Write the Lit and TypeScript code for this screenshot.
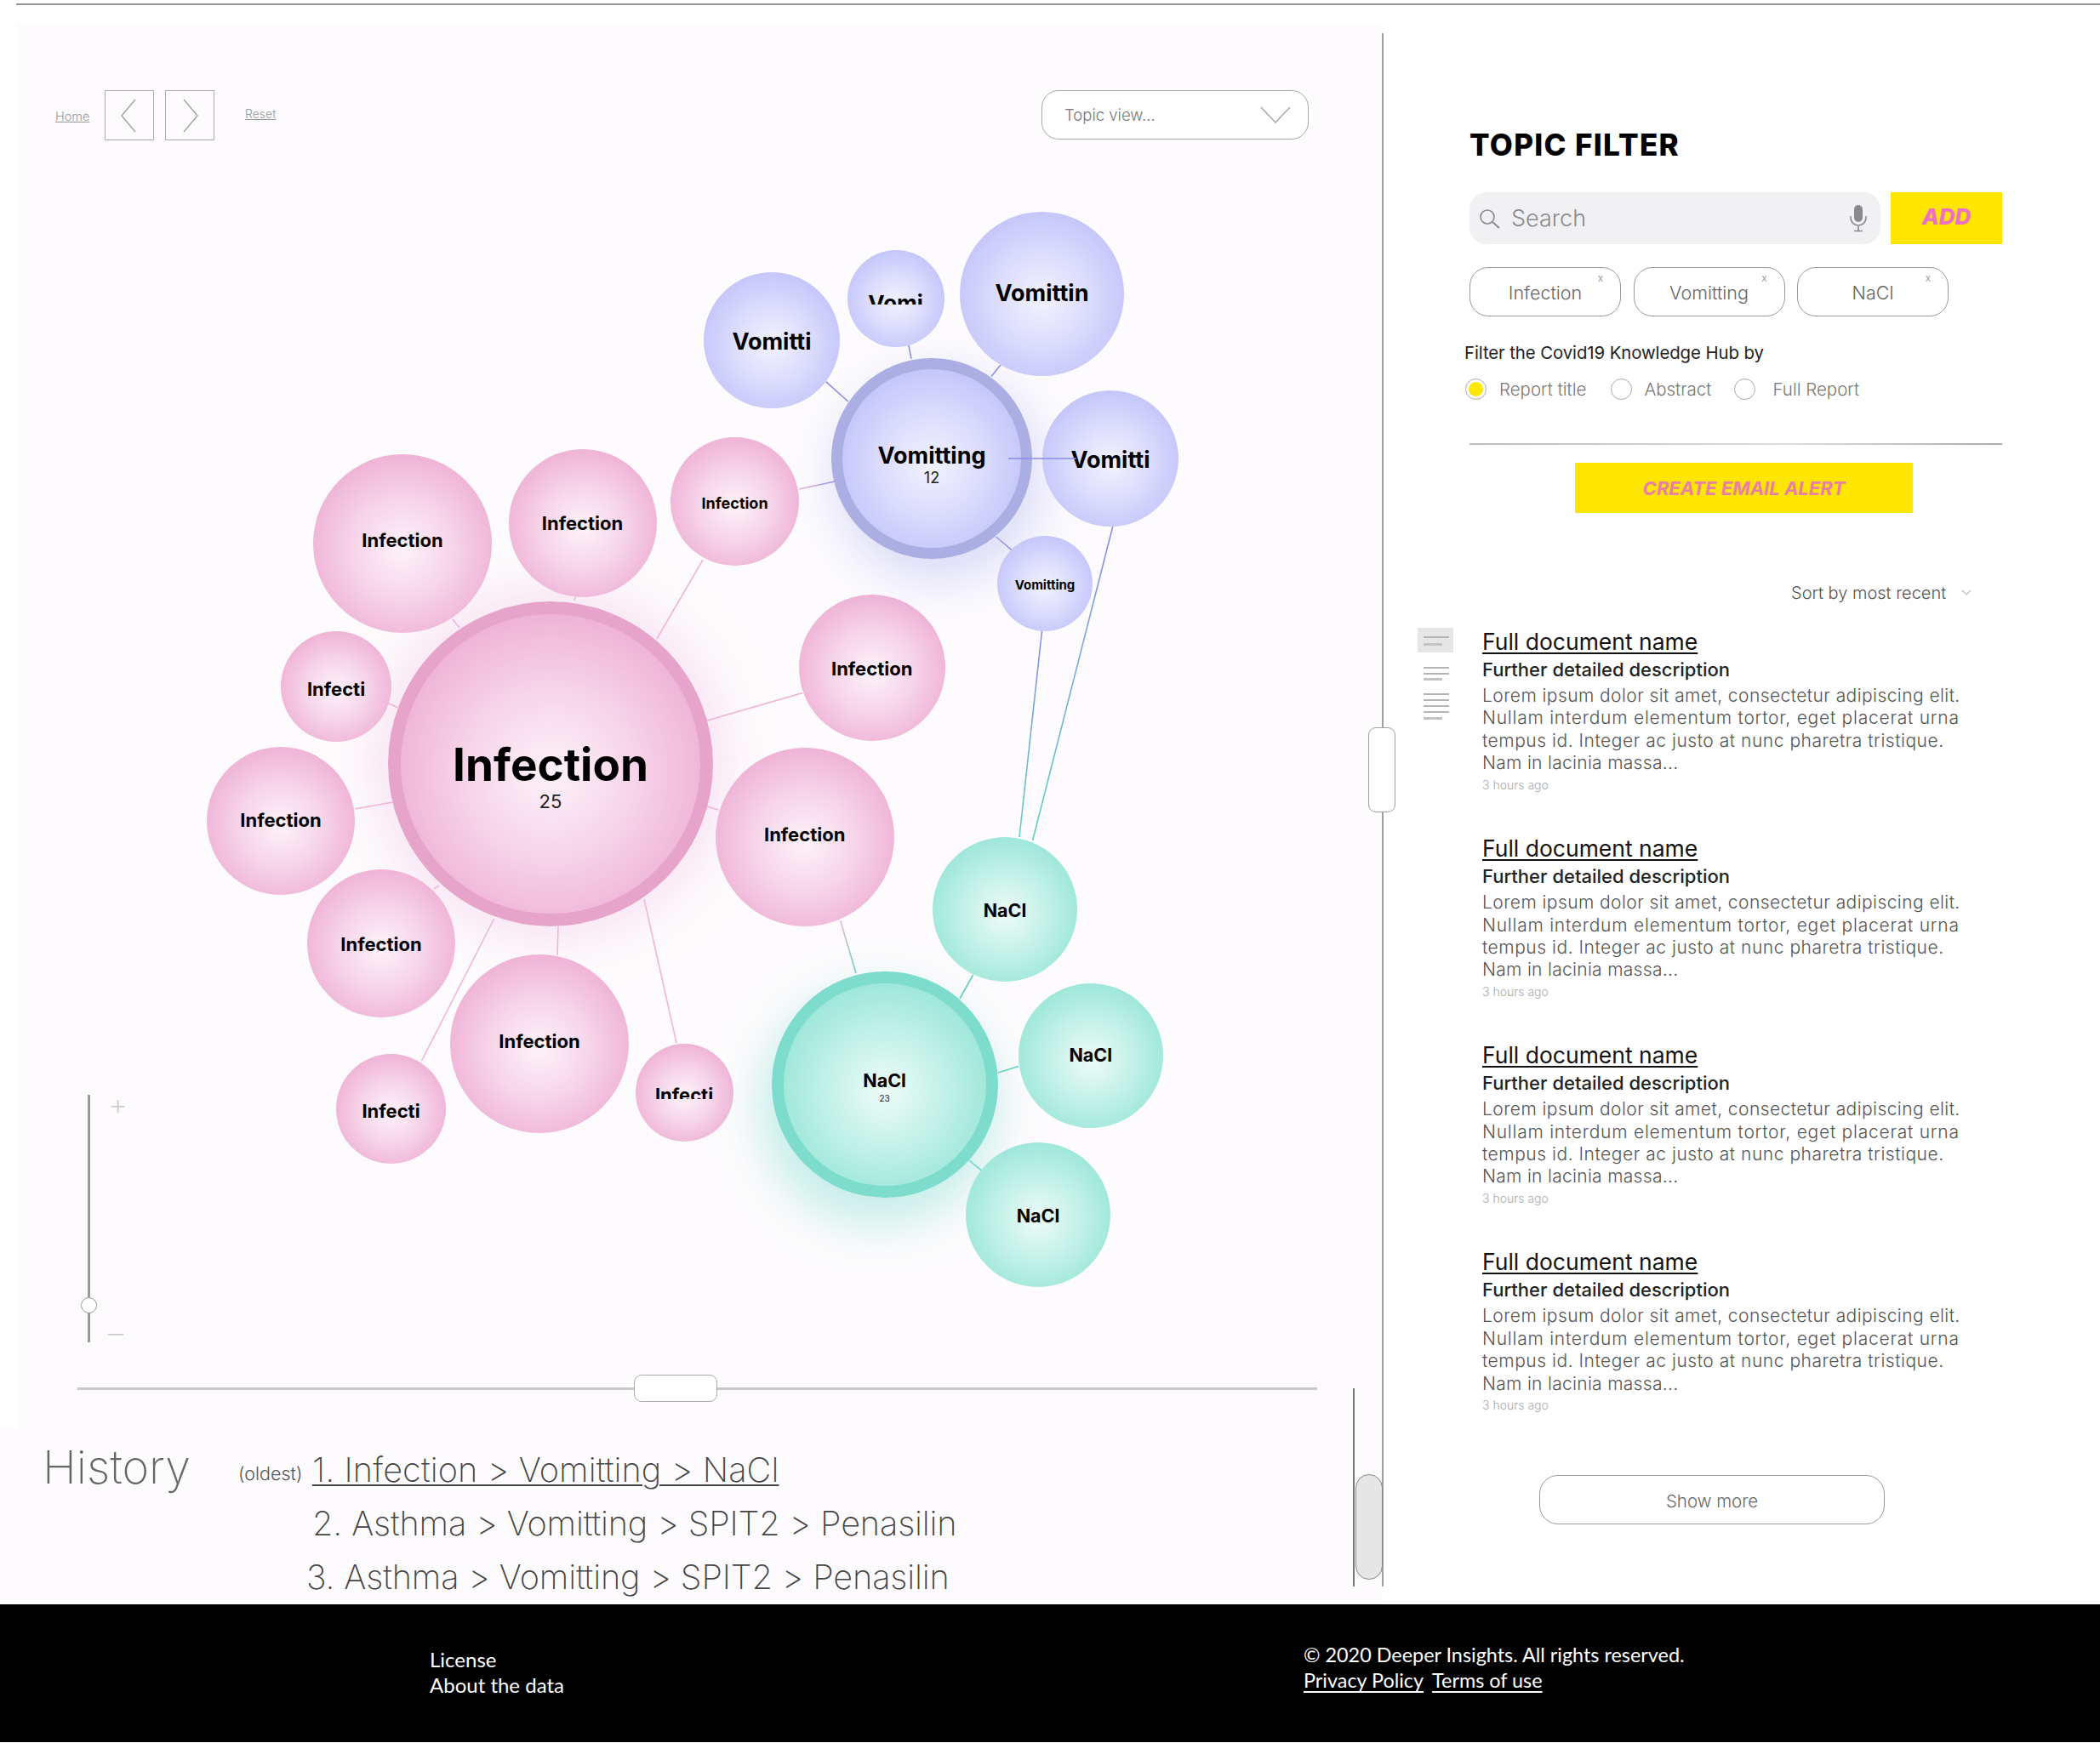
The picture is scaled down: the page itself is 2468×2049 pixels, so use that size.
import { LitElement, html, css, svg } from "lit";
import { customElement } from "lit/decorators.js";

type Tone = "pink" | "blue" | "teal";
interface Node { x: number; y: number; r: number; t: Tone; label: string; fs: number; dy?: number; clip?: number; main?: boolean; count?: string; cfs?: number; cgap?: number; }

const OX = 19, OY = 200;

const NODES: Node[] = [
  { x: 647, y: 897.5, r: 191, t: "pink", label: "Infection", fs: 53, main: true, count: "25", cfs: 22, cgap: 5, dy: 15 },
  { x: 473, y: 639, r: 105, t: "pink", label: "Infection", fs: 22, dy: -4 },
  { x: 684.5, y: 615, r: 87, t: "pink", label: "Infection", fs: 22, dy: 0 },
  { x: 863.6, y: 589, r: 75.5, t: "pink", label: "Infection", fs: 18, dy: 3 },
  { x: 1024.7, y: 785, r: 86, t: "pink", label: "Infection", fs: 22, dy: 1 },
  { x: 945.7, y: 984, r: 105, t: "pink", label: "Infection", fs: 22, dy: -3 },
  { x: 395, y: 807, r: 65, t: "pink", label: "Infecti", fs: 22, dy: 3 },
  { x: 330, y: 964.5, r: 87, t: "pink", label: "Infection", fs: 22, dy: -1 },
  { x: 448, y: 1108.5, r: 87, t: "pink", label: "Infection", fs: 22, dy: 1 },
  { x: 634, y: 1227, r: 105, t: "pink", label: "Infection", fs: 22, dy: -3 },
  { x: 459.5, y: 1303.7, r: 64.5, t: "pink", label: "Infecti", fs: 22, dy: 2 },
  { x: 804, y: 1284, r: 57.5, t: "pink", label: "Infecti", fs: 22, clip: 15.5, dy: 0 },
  { x: 1095, y: 539, r: 118, t: "blue", label: "Vomitting", fs: 27, main: true, count: "12", cfs: 18, cgap: 4, dy: 7 },
  { x: 907, y: 400, r: 80, t: "blue", label: "Vomitti", fs: 27, dy: 1 },
  { x: 1052.6, y: 350.7, r: 57, t: "blue", label: "Vomi", fs: 26, clip: 14, dy: 0 },
  { x: 1224.5, y: 345.7, r: 96.5, t: "blue", label: "Vomittin", fs: 27, dy: -1 },
  { x: 1305, y: 539, r: 80, t: "blue", label: "Vomitti", fs: 27, dy: 1 },
  { x: 1228, y: 686, r: 56, t: "blue", label: "Vomitting", fs: 15, dy: 1 },
  { x: 1039.6, y: 1275, r: 133, t: "teal", label: "NaCl", fs: 21.5, main: true, count: "23", cfs: 10, cgap: 5, dy: 3 },
  { x: 1181, y: 1068.6, r: 85, t: "teal", label: "NaCl", fs: 21.5, dy: 2 },
  { x: 1281.8, y: 1241, r: 85, t: "teal", label: "NaCl", fs: 21.5, dy: 0 },
  { x: 1220, y: 1428, r: 85, t: "teal", label: "NaCl", fs: 21.5, dy: 2 },
];

const PINK = "#efb6d8", BLUE = "#8a8cec", TEAL = "#5fd2c1";
const EDGES: [number, number, number, number, string, string][] = [
  [772, 751, 826, 658, PINK, PINK],
  [831, 847, 943, 814.6, PINK, PINK],
  [831, 948, 844, 952, PINK, PINK],
  [675, 706, 676, 702, PINK, PINK],
  [532, 728, 540, 738, PINK, PINK],
  [457, 827, 467.5, 832, PINK, PINK],
  [417, 951, 462, 943, PINK, PINK],
  [510, 1045, 516, 1041, PINK, PINK],
  [656, 1089, 655, 1123, PINK, PINK],
  [580.6, 1080, 495.6, 1247, PINK, PINK],
  [757, 1057, 795, 1226, PINK, PINK],
  [939, 575, 981, 566, PINK, BLUE],
  [987.6, 1082, 1006, 1144, PINK, TEAL],
  [970.6, 448.6, 996.7, 472, BLUE, BLUE],
  [1067.8, 405.6, 1071, 421.6, BLUE, BLUE],
  [1176, 429, 1165, 442.6, BLUE, BLUE],
  [1170.6, 631, 1189, 646.6, BLUE, BLUE],
  [1308, 618, 1213.6, 988, BLUE, TEAL],
  [1224.6, 741, 1198, 984, BLUE, TEAL],
  [1143.6, 1146, 1128, 1174, TEAL, TEAL],
  [1173, 1261, 1197, 1253.5, TEAL, TEAL],
  [1139, 1364, 1153, 1375.6, TEAL, TEAL],
];

const DOCS = [0, 1, 2, 3];
const LOREM = [
  "Lorem ipsum dolor sit amet, consectetur adipiscing elit.",
  "Nullam interdum elementum tortor, eget placerat urna",
  "tempus id. Integer ac justo at nunc pharetra tristique.",
  "Nam in lacinia massa...",
];

@customElement("app-root")
export class AppRoot extends LitElement {
  static styles = css`
    :host { display: block; width: 2468px; height: 2049px; font-family: "Inter", "Liberation Sans", sans-serif; color: #000; background: #fff; overflow: hidden; }
    * { box-sizing: border-box; }
    a { color: inherit; }
    .page { display: flex; flex-direction: column; height: 2049px; }
    .rule { height: 2px; margin: 4px 0 0 19px; background: #999; flex: none; }
    .main { display: flex; height: 1880px; flex: none; position: relative; }

    .left { width: 1625px; flex: none; display: flex; flex-direction: column; padding-top: 22px; }
    .canvas { margin-left: 19px; height: 1650px; flex: none; background: #fdfbfd; display: flex; flex-direction: column; }
    .toolbar { height: 172px; flex: none; padding: 78px 87px 0 46px; display: flex; align-items: flex-start; }
    .crumb { font-size: 14.5px; font-weight: 300; color: #999; text-decoration: underline; line-height: 59px; }
    .home { width: 58px; position: relative; top: 1px; }
    .reset { margin-left: 23px; position: relative; top: -2px; font-size: 14px; }
    .nav { width: 58px; height: 59px; border: 1.5px solid #b0adb0; display: flex; align-items: center; justify-content: center; margin-right: 13px; }
    .nav svg { width: 24px; height: 46px; }
    .select { margin-left: auto; width: 314px; height: 58px; border: 1.5px solid #a8a8a8; border-radius: 20px; background: #fff; display: flex; align-items: center; justify-content: space-between; padding: 0 20px 0 26px; font-size: 18.5px; font-weight: 300; color: #777; }
    .select svg { width: 36px; height: 20px; }

    .stage { position: relative; height: 1400px; flex: none; }
    .edges { position: absolute; left: 0; top: 0; pointer-events: none; }
    .bubble { position: absolute; border-radius: 50%; display: flex; flex-direction: column; align-items: center; justify-content: center; }
    .pink { background: radial-gradient(circle farthest-side at 50% 53%, #fdf2f9 0%, #f7d6ea 50%, #efb3d6 100%); }
    .blue { background: radial-gradient(circle farthest-side at 50% 53%, #f2f2ff 0%, #dddefd 50%, #c4c6fa 100%); }
    .teal { background: radial-gradient(circle farthest-side at 50% 53%, #eefbf8 0%, #c6f2e9 50%, #9ee7da 100%); }
    .main-pink { border: 15px solid #e7a4cb; box-shadow: 0 0 60px 10px rgba(243, 178, 220, 0.38); }
    .main-blue { border: 13px solid #aaaee3; box-shadow: 8px 22px 50px 6px rgba(176, 180, 245, 0.42); }
    .main-teal { border: 14px solid #7edccd; box-shadow: -8px 26px 50px 6px rgba(130, 225, 208, 0.45); }
    .lab { font-weight: 700; line-height: 1; white-space: nowrap; flex: none; }
    .lab.clip { overflow: hidden; }
    .cnt { font-weight: 400; line-height: 1; flex: none; color: #222; }

    .vslider { position: absolute; left: 84px; top: 1087px; width: 3px; height: 291px; background: #999; }
    .vslider i { position: absolute; left: -8px; top: 238px; width: 19px; height: 19px; border-radius: 50%; background: #fff; border: 1.5px solid #999; }
    .vslider b { position: absolute; left: 24px; font-weight: 200; color: #c8c8c8; font-size: 36px; line-height: 1; }
    .plus { top: -7px; }
    .minus { top: 262px; }

    .hslider { display: flex; align-items: center; margin: 16px 0 0 72px; width: 1457px; height: 32px; flex: none; }
    .hslider span { height: 3px; background: #c9c7c9; }
    .track-a { width: 654px; flex: none; }
    .track-b { flex: 1; }
    .hslider i { width: 98px; height: 32px; flex: none; background: #fff; border: 1.5px solid #a9a9a9; border-radius: 9px; }

    .history { flex: 1; background: #fdfbfd; display: grid; grid-template-columns: 230px 87px 1fr; grid-auto-rows: 63px; padding: 19px 0 0 50px; color: #555; align-items: center; }
    .hist-title { font-size: 54px; font-weight: 200; color: #666; position: relative; top: -4px; line-height: 1; }
    .oldest { font-size: 21.5px; font-weight: 300; position: relative; top: 3px; }
    .hist { grid-column: 3; font-size: 39.7px; font-weight: 200; white-space: nowrap; line-height: 1; color: #444; letter-spacing: -0.15px; }
    .hist.u { text-decoration: underline; text-decoration-thickness: 2px; text-underline-offset: 3px; letter-spacing: 0.1px; }
    .hist.o { margin-left: -7px; }

    .vline { position: absolute; left: 1624px; top: 33px; width: 1.5px; height: 1826px; background: #a0a0a0; }
    .vline2 { position: absolute; left: 1590px; top: 1626px; width: 1.5px; height: 233px; background: #777; }
    .thumb-a { position: absolute; left: 1608px; top: 849px; width: 32px; height: 100px; background: #fff; border: 1.5px solid #a0a0a0; border-radius: 9px; }
    .thumb-b { position: absolute; left: 1593px; top: 1727px; width: 32px; height: 124px; background: #e6e6e6; border: 1.5px solid #888; border-radius: 16px; }

    .right { flex: 1; padding: 144px 0 0 102px; display: flex; flex-direction: column; align-items: flex-start; }
    h1 { margin: 0; font-size: 35px; line-height: 40px; font-weight: 800; letter-spacing: 1.3px; white-space: nowrap; }
    .search-row { display: flex; gap: 12px; margin-top: 36px; }
    .search { width: 483px; height: 61px; border-radius: 20px; background: #f1f1f4; display: flex; align-items: center; padding: 0 15px 0 11px; color: #8a8a8e; font-size: 27px; font-weight: 300; }
    .search span { margin-left: 12px; flex: 1; }
    .search svg { flex: none; }
    .add { width: 131px; height: 61px; background: #ffe600; color: #ee6fc7; font-weight: 800; font-style: italic; font-size: 26px; display: flex; align-items: center; justify-content: center; padding-bottom: 4px; }
    .chips { display: flex; gap: 14.5px; margin-top: 27px; }
    .chip { position: relative; width: 178px; height: 58px; border: 1.5px solid #999; border-radius: 22px; display: flex; align-items: center; justify-content: center; font-size: 21.5px; font-weight: 300; color: #666; padding-top: 1px; }
    .chip em { position: absolute; right: 20px; top: 5px; font-style: normal; font-size: 12px; color: #888; line-height: 14px; }
    .filter-by { margin: 31px 0 0 -6px; font-size: 20.4px; line-height: 24px; font-weight: 400; color: #222; letter-spacing: -0.1px; white-space: nowrap; }
    .radios { display: flex; align-items: center; margin: 18px 0 0 -5px; height: 24px; font-size: 20.5px; font-weight: 300; color: #777; white-space: nowrap; }
    .radio { width: 25px; height: 25px; border: 1px solid #aaa; border-radius: 50%; flex: none; display: flex; align-items: center; justify-content: center; }
    .radio i { width: 17px; height: 17px; border-radius: 50%; background: #ffe600; }
    .r1 { margin-right: 15px; }
    .t1 { margin-right: 29px; }
    .r2 { margin-right: 14px; }
    .t2 { margin-right: 27px; }
    .r3 { margin-right: 20px; }
    .divider { width: 626px; height: 2px; margin-top: 52px; background: linear-gradient(90deg, #bbb, #ddd 60%, #aaa); }
    .alert { margin: 21px 0 0 124px; width: 397px; height: 59px; background: #ffe600; color: #e97fa3; font-style: italic; font-weight: 700; font-size: 22px; display: flex; align-items: center; justify-content: center; }
    .sort { margin: 82px 0 0 378px; display: flex; align-items: center; font-size: 20px; line-height: 24px; font-weight: 300; color: #555; gap: 18px; white-space: nowrap; }
    .sort svg { width: 12px; height: 8px; }
    .list { display: flex; margin: 29px 0 0 -61px; }
    .views { width: 42px; flex: none; margin-right: 34px; display: flex; flex-direction: column; }
    .view { padding: 0 5px 0 7px; display: flex; flex-direction: column; align-items: flex-start; }
    .view u { display: block; height: 2px; width: 30px; background: #b5b5b5; text-decoration: none; }
    .view u.s { width: 22px; height: 3px; background: #c4c4c4; }
    .v1 { background: #e6e6e6; height: 29px; gap: 6px; padding-top: 10px; }
    .v2 { margin-top: 17px; gap: 4.5px; }
    .v3 { margin-top: 15px; gap: 5px; }
    .docs { display: flex; flex-direction: column; gap: 50.5px; }
    .doc-title { font-size: 26.5px; line-height: 32px; font-weight: 400; color: #111; text-decoration: underline; text-decoration-thickness: 1.5px; text-underline-offset: 3px; display: block; white-space: nowrap; }
    .doc-sub { font-size: 22px; line-height: 28px; margin-top: 3px; font-weight: 500; color: #222; white-space: nowrap; }
    .doc-body { margin-top: 4px; font-size: 21px; line-height: 26.4px; font-weight: 300; color: #555; white-space: nowrap; letter-spacing: 0.43px; }
    .doc-body div:nth-child(2) { letter-spacing: 0.76px; }
    .doc-body div:nth-child(3) { letter-spacing: 0.53px; }
    .doc-body div:nth-child(4) { letter-spacing: 0.3px; }
    .doc-time { margin-top: 4px; font-size: 14px; line-height: 16px; font-weight: 300; color: #aaa; }
    .more { margin: 74px 0 0 82px; width: 406px; height: 58px; border: 1.5px solid #999; border-radius: 22px; display: flex; align-items: center; justify-content: center; font-size: 20.5px; font-weight: 300; color: #666; padding-top: 3px; }

    footer { flex: 1; margin-bottom: 1px; background: #000; color: #fff; display: flex; align-items: flex-start; padding: 50px 0 0 505px; font-family: "Lato", "Liberation Sans", sans-serif; font-size: 24px; line-height: 30px; font-weight: 400; }
    .f-left { width: 1027px; flex: none; }
    .f-right { margin-top: -6px; font-size: 23.4px; }
    .f-right a { margin-right: 10px; text-underline-offset: 4px; }
  `;

  private bubble(n: Node) {
    const d = n.r * 2;
    const cls = `bubble ${n.t}${n.main ? ` main-${n.t}` : ""}`;
    const pos = `left:${n.x - n.r - OX}px;top:${n.y - n.r - OY}px;width:${d}px;height:${d}px`;
    const lab = `font-size:${n.fs}px;${n.clip ? `height:${n.clip}px;` : ""}`;
    const wrap = `display:flex;flex-direction:column;align-items:center;transform:translateY(${n.dy ?? 0}px)`;
    return html`<div class=${cls} style=${pos}>
      <div style=${wrap}>
        <div class="lab ${n.clip ? "clip" : ""}" style=${lab}>${n.label}</div>
        ${n.count ? html`<div class="cnt" style="font-size:${n.cfs}px;margin-top:${n.cgap}px">${n.count}</div>` : ""}
      </div>
    </div>`;
  }

  private graph(top: boolean) {
    const W = 1606, H = 1400;
    if (top) {
      return html`<svg class="edges" width=${W} height=${H} viewBox="${OX} ${OY} ${W} ${H}">
        <line x1="1185" y1="539" x2="1265" y2="539" stroke=${BLUE} stroke-width="1.5"></line>
      </svg>`;
    }
    return html`<svg class="edges" width=${W} height=${H} viewBox="${OX} ${OY} ${W} ${H}">
      <defs>
        ${EDGES.map((e, i) => svg`<linearGradient id="g${i}" gradientUnits="userSpaceOnUse" x1=${e[0]} y1=${e[1]} x2=${e[2]} y2=${e[3]}>
          <stop offset="0" stop-color=${e[4]}></stop><stop offset="1" stop-color=${e[5]}></stop>
        </linearGradient>`)}
      </defs>
      ${EDGES.map((e, i) => svg`<path d="M${e[0]} ${e[1]}L${e[2] + 0.01} ${e[3] + 0.01}" stroke="url(#g${i})" stroke-width="1.6" fill="none"></path>`)}
    </svg>`;
  }

  render() {
    return html`<div class="page">
      <div class="rule"></div>
      <div class="main">
        <section class="left">
          <div class="canvas">
            <div class="toolbar">
              <a class="crumb home">Home</a>
              <div class="nav"><svg viewBox="0 0 24 46"><path d="M19 4 3 23l16 19" fill="none" stroke="#a5a5a5" stroke-width="1.5"></path></svg></div>
              <div class="nav"><svg viewBox="0 0 24 46"><path d="M5 4l16 19L5 42" fill="none" stroke="#a5a5a5" stroke-width="1.5"></path></svg></div>
              <a class="crumb reset">Reset</a>
              <div class="select"><span>Topic view...</span>
                <svg viewBox="0 0 36 20"><path d="M1 1l17 18L35 1" fill="none" stroke="#aaa" stroke-width="1.5"></path></svg>
              </div>
            </div>
            <div class="stage">
              ${this.graph(false)}
              ${NODES.map((n) => this.bubble(n))}
              ${this.graph(true)}
              <div class="vslider"><i></i><b class="plus">+</b><b class="minus">–</b></div>
            </div>
            <div class="hslider"><span class="track-a"></span><i></i><span class="track-b"></span></div>
          </div>
          <div class="history">
            <div class="hist-title">History</div>
            <div class="oldest">(oldest)</div>
            <div class="hist u">1. Infection &gt; Vomitting &gt; NaCl</div>
            <div class="hist">2. Asthma &gt; Vomitting &gt; SPIT2 &gt; Penasilin</div>
            <div class="hist o">3. Asthma &gt; Vomitting &gt; SPIT2 &gt; Penasilin</div>
          </div>
        </section>
        <div class="vline"></div>
        <div class="vline2"></div>
        <div class="thumb-a"></div>
        <div class="thumb-b"></div>
        <section class="right">
          <h1>TOPIC FILTER</h1>
          <div class="search-row">
            <div class="search">
              <svg width="26" height="24" viewBox="0 0 26 24"><circle cx="10" cy="10" r="8" fill="none" stroke="#8a8a8e" stroke-width="1.6"></circle><path d="M16 16l8 7" stroke="#8a8a8e" stroke-width="2" fill="none"></path></svg>
              <span>Search</span>
              <svg width="22" height="33" viewBox="0 0 22 33"><rect x="6" y="1" width="10" height="20" rx="5" fill="#8a8a8e"></rect><path d="M2 14v2a9 9 0 0 0 18 0v-2M11 25v6M6 31.5h10" fill="none" stroke="#8a8a8e" stroke-width="1.6"></path></svg>
            </div>
            <div class="add">ADD</div>
          </div>
          <div class="chips">
            ${["Infection", "Vomitting", "NaCl"].map((c) => html`<div class="chip">${c}<em>x</em></div>`)}
          </div>
          <div class="filter-by">Filter the Covid19 Knowledge Hub by</div>
          <div class="radios">
            <div class="radio r1"><i></i></div><span class="t1">Report title</span>
            <div class="radio r2"></div><span class="t2">Abstract</span>
            <div class="radio r3"></div><span>Full Report</span>
          </div>
          <div class="divider"></div>
          <div class="alert">CREATE EMAIL ALERT</div>
          <div class="sort"><span>Sort by most recent</span>
            <svg viewBox="0 0 12 8"><path d="M1 1l5 5 5-5" fill="none" stroke="#bbb" stroke-width="1.2"></path></svg>
          </div>
          <div class="list">
            <div class="views">
              <div class="view v1"><u></u><u class="s"></u></div>
              <div class="view v2"><u></u><u></u><u class="s"></u></div>
              <div class="view v3"><u></u><u></u><u></u><u></u><u class="s"></u></div>
            </div>
            <div class="docs">
              ${DOCS.map(() => html`<article>
                <a class="doc-title">Full document name</a>
                <div class="doc-sub">Further detailed description</div>
                <div class="doc-body">${LOREM.map((l) => html`<div>${l}</div>`)}</div>
                <div class="doc-time">3 hours ago</div>
              </article>`)}
            </div>
          </div>
          <div class="more">Show more</div>
        </section>
      </div>
      <footer>
        <div class="f-left"><div>License</div><div>About the data</div></div>
        <div class="f-right"><div>© 2020 Deeper Insights. All rights reserved.</div><div><a href="#">Privacy Policy</a><a href="#">Terms of use</a></div></div>
      </footer>
    </div>`;
  }
}
